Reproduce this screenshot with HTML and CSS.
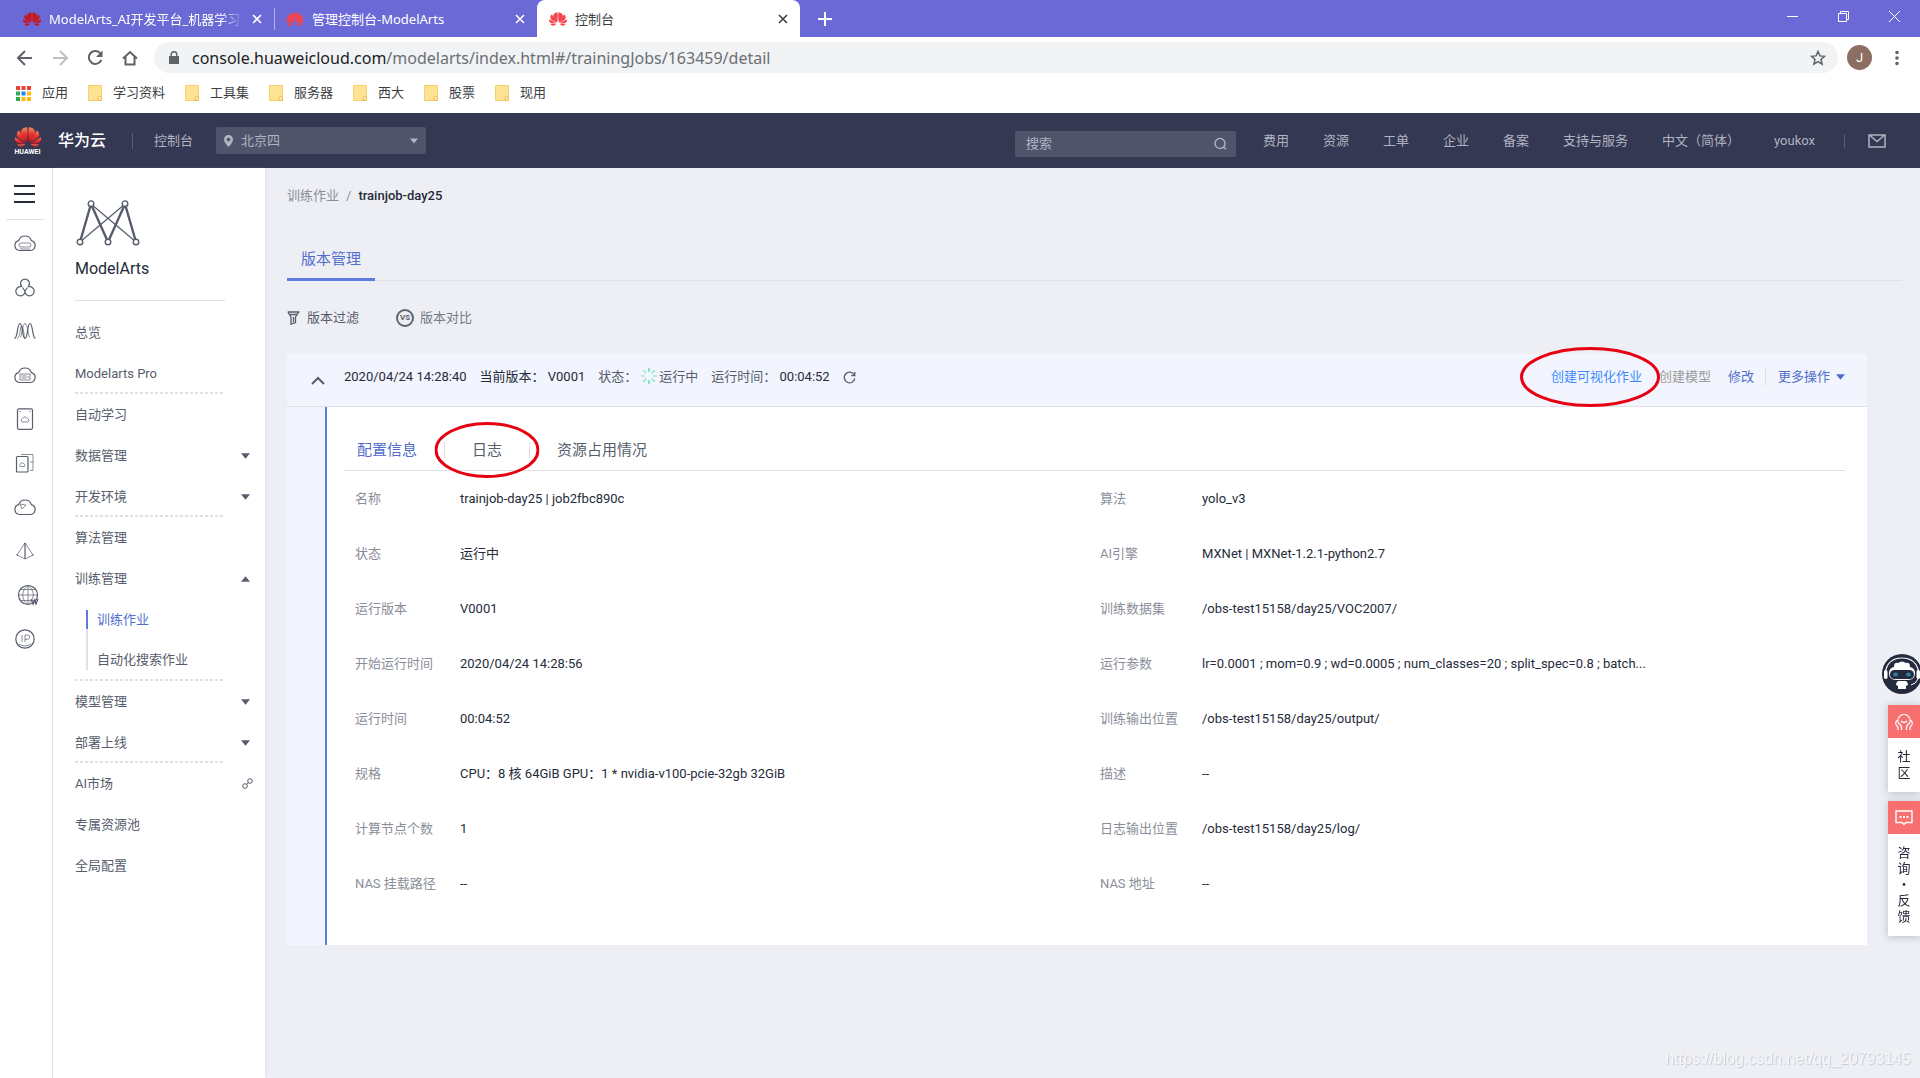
FILE: index.html
```html
<!DOCTYPE html>
<html lang="zh-CN">
<head>
<meta charset="utf-8">
<title>控制台</title>
<link rel="stylesheet" href="styles.css">
</head>
<body>
<svg class="defs" aria-hidden="true">
  <defs>
    <linearGradient id="red" x1="0" y1="0" x2="0" y2="1"><stop offset="0" stop-color="#f58a6a"/><stop offset=".45" stop-color="#e8342c"/><stop offset="1" stop-color="#c9151e"/></linearGradient>
    <g id="petals">
      <path d="M3.67 6.14S1.82 7.91 1.72 9.78v.35c.08 1.51 1.22 2.4 1.22 2.4 1.83 1.79 6.26 4.04 7.3 4.55l.12-.05v-.04C7.52 10.8 3.67 6.14 3.67 6.14z"/>
      <path d="M9.65 18.6l-.1-.08-7.38.26c.8 1.43 2.15 2.53 3.56 2.2.96-.25 3.16-1.78 3.92-2.38z"/>
      <path d="M9.75 18.05C7.2 16.1.29 12.26.29 12.26-.2 13.7.2 14.9.2 14.9c.72 1.95 3.1 2.86 3.1 2.86 1.2.5 5.8.35 6.45.29z"/>
      <path d="M10.9 16.7c1-3.7.9-10.7.4-13.3 0 0-.5-.4-1.2-.2-1.6.3-3.3 1.4-3.9 2.3-1 1.6-.5 3.2-.5 3.2.9 2.9 3.8 6.600 5.200 8z"/>
    </g>
    <symbol id="huawei" viewBox="0 2 24 20"><use href="#petals"/><use href="#petals" transform="translate(24 0) scale(-1 1)"/></symbol>
    <symbol id="close" viewBox="0 0 10 10"><path d="M1 1l8 8M9 1L1 9" fill="none" stroke="currentColor" stroke-width="1.6"/></symbol>
    <symbol id="folder" viewBox="0 0 14 16"><path d="M.5.5h13v15H.5z" fill="#fde293" stroke="#f3d26b"/><path d="M10 15.500v-3q1.700-2.500 3.500 0v3z" fill="#fbe8a8" stroke="#e9c14f"/></symbol>
    <symbol id="down" viewBox="0 0 10 6"><path d="M0 0h10L5 6z" fill="currentColor"/></symbol>
  </defs>
</svg>

<div class="tabstrip">
  <a class="tab" href="#"><svg class="fav deep"><use href="#huawei"/></svg><span class="tab-title fade">ModelArts_AI开发平台_机器学习</span><svg class="x"><use href="#close"/></svg></a>
  <a class="tab split" href="#"><svg class="fav"><use href="#huawei"/></svg><span class="tab-title">管理控制台-ModelArts</span><svg class="x"><use href="#close"/></svg></a>
  <a class="tab active" href="#"><svg class="fav"><use href="#huawei"/></svg><span class="tab-title">控制台</span><svg class="x"><use href="#close"/></svg></a>
  <button class="newtab" aria-label="New tab"><svg width="14" height="14" viewBox="0 0 14 14"><path d="M7 0v14M0 7h14" stroke="#fff" stroke-width="2"/></svg></button>
  <div class="winbtns">
    <button aria-label="Minimize"><svg width="11" height="11" viewBox="0 0 11 11"><path d="M0 5.500h11" stroke="#fff"/></svg></button>
    <button aria-label="Restore"><svg width="11" height="11" viewBox="0 0 11 11"><path d="M.5 2.500h8v8h-8zM2.500 2.500v-2h8v8h-2" fill="none" stroke="#fff"/></svg></button>
    <button aria-label="Close"><svg width="11" height="11" viewBox="0 0 11 11"><path d="M0 0l11 11M11 0L0 11" stroke="#fff"/></svg></button>
  </div>
</div>

<div class="toolbar">
  <button aria-label="Back"><svg width="18" height="18" viewBox="0 0 18 18"><path d="M16 9H3M9 2L2 9l7 7" fill="none" stroke="#5f6368" stroke-width="2"/></svg></button>
  <button aria-label="Forward"><svg width="18" height="18" viewBox="0 0 18 18"><path d="M2 9h13M9 2l7 7-7 7" fill="none" stroke="#bdc1c6" stroke-width="2"/></svg></button>
  <button aria-label="Reload"><svg width="18" height="18" viewBox="0 0 18 18"><path d="M14.500 4.500A6.500 6.500 0 1 0 15.300 11" fill="none" stroke="#5f6368" stroke-width="2"/><path d="M16.500 1.500v6.500h-6.500z" fill="#5f6368"/></svg></button>
  <button aria-label="Home"><svg width="18" height="18" viewBox="0 0 18 18"><path d="M2 9.500L9 3l7 6.500M4.500 8v7.500h9V8" fill="none" stroke="#5f6368" stroke-width="2"/></svg></button>
  <div class="omnibox">
    <svg width="10" height="13" viewBox="0 0 10 13"><path d="M0 5h10v8H0z" fill="#5f6368"/><path d="M2.200 5V3.500a2.800 2.800 0 0 1 5.600 0V5" fill="none" stroke="#5f6368" stroke-width="1.400"/></svg>
    <span class="url">console.huaweicloud.com<span class="path">/modelarts/index.html#/trainingJobs/163459/detail</span></span>
    <svg width="16" height="16" viewBox="0 0 16 16"><path d="M8 1.500l1.900 4.400 4.700.4-3.600 3.100 1.100 4.700L8 11.600l-4.100 2.500L5 9.400 1.400 6.300l4.700-.4z" fill="none" stroke="#5f6368" stroke-width="1.500"/></svg>
  </div>
  <span class="avatar">J</span>
  <button class="menu" aria-label="Menu"><svg width="4" height="16" viewBox="0 0 4 16"><g fill="#5f6368"><circle cx="2" cy="2.500" r="1.800"/><circle cx="2" cy="8" r="1.800"/><circle cx="2" cy="13.500" r="1.800"/></g></svg></button>
</div>

<div class="bookmarks">
  <a class="apps" href="#"><svg width="15" height="15" viewBox="0 0 15 15"><path d="M0 0h4v4H0zM5.500 0h4v4h-4zM11 0h4v4h-4z" fill="#ea4335"/><path d="M0 5.500h4v4H0zM0 11h4v4H0z" fill="#34a853"/><path d="M5.500 5.500h4v4h-4z" fill="#1a86f5"/><path d="M11 5.500h4v4h-4zM5.500 11h4v4h-4zM11 11h4v4h-4z" fill="#fbbc05"/></svg>应用</a>
  <a href="#"><svg class="fold"><use href="#folder"/></svg>学习资料</a>
  <a href="#"><svg class="fold"><use href="#folder"/></svg>工具集</a>
  <a href="#"><svg class="fold"><use href="#folder"/></svg>服务器</a>
  <a href="#"><svg class="fold"><use href="#folder"/></svg>西大</a>
  <a href="#"><svg class="fold"><use href="#folder"/></svg>股票</a>
  <a href="#"><svg class="fold"><use href="#folder"/></svg>现用</a>
</div>

<header class="header">
  <a class="brand" href="#"><span class="logo"><svg width="28" height="22"><use href="#huawei" fill="url(#red)"/></svg><span class="logo-text">HUAWEI</span></span><span class="brand-name">华为云</span></a>
  <a class="console" href="#">控制台</a>
  <button class="region"><svg width="9" height="12" viewBox="0 0 9 12"><path fill-rule="evenodd" d="M4.500 0A4.500 4.500 0 0 1 9 4.500C9 7.500 4.500 12 4.500 12S0 7.500 0 4.500A4.500 4.500 0 0 1 4.500 0zm0 2.800a1.800 1.800 0 1 0 0 3.600 1.800 1.800 0 0 0 0-3.600z" fill="#b0b3c0"/></svg><span>北京四</span><svg class="caret"><use href="#down"/></svg></button>
  <label class="search"><input type="text" placeholder="搜索" aria-label="搜索"><svg width="13" height="13" viewBox="0 0 13 13"><path d="M9.500 10A5 5 0 1 1 11 6q0 2.500-1.500 4l2.500 2.300" fill="none" stroke="#b0b3c0" stroke-width="1.400"/></svg></label>
  <nav class="topnav">
    <a href="#">费用</a><a href="#">资源</a><a href="#">工单</a><a href="#">企业</a><a href="#">备案</a><a href="#">支持与服务</a><a href="#">中文（简体）</a><a href="#">youkox</a>
  </nav>
  <a class="mail" href="#" aria-label="Messages"><svg width="18" height="14" viewBox="0 0 18 14"><path d="M1 1h16v12H1zM2 1.500l7 6 7-6" fill="none" stroke="#b0b3c0" stroke-width="1.500"/></svg></a>
</header>

<div class="body">
  <nav class="rail">
    <button class="burger" aria-label="Menu"><svg width="22" height="20" viewBox="0 0 22 20"><path d="M0 2h21M0 10h21M0 18h21" stroke="#252b3a" stroke-width="2"/></svg></button>
    <a href="#"><svg viewBox="0 0 22 22"><path d="M5.500 18.500A5 5 0 0 1 4.600 8.700 6.700 6.700 0 0 1 17.400 8.700a5 5 0 0 1-.9 9.800z"/><path class="thin" d="M8 11h7a1.800 1.800 0 0 1 0 4H7a1.800 1.800 0 0 1 0-4zM6 17h10"/></svg></a>
    <a href="#"><svg viewBox="0 0 22 22"><path d="M8 11A4.500 4.500 0 1 1 14 11M11 15a4.600 4.600 0 1 1-4.400-4.300M11 15a4.600 4.600 0 1 0 4.400-4.300M11 15l-2.500-3.500M11 15l2.500-3.500M7 8v3M15 8v3"/></svg></a>
    <a href="#"><svg viewBox="0 0 22 22"><path d="M.5 18.500C4 18 3 3.500 6 3.500S8 18.500 11 18.500 13 3.500 16 3.500 18 18 21.500 18.500"/><path class="thin" d="M3 18.500C7 17 6 3.500 8 6s2 12.500 3 12.500M11 3.500c3 0 3 14 5 14M11 3.500c-3 0-3 14-5 14"/></svg></a>
    <a href="#"><svg viewBox="0 0 22 22"><path d="M5.500 18.500A5 5 0 0 1 4.600 8.700 6.700 6.700 0 0 1 17.400 8.700a5 5 0 0 1-.9 9.800z"/><path class="thin" d="M6 10h10v6H6zM7.500 12h5M7.500 14h5M14 12v2"/></svg></a>
    <a href="#"><svg viewBox="0 0 22 22"><path d="M5 .8h12q1.500 0 1.500 1.500v17.500q0 1.500-1.500 1.500H5q-1.500 0-1.500-1.500V2.300Q3.500.8 5 .8z"/><path class="thin" d="M8 14a2 2 0 0 1 .5-3.500 2.800 2.800 0 0 1 5 0A2 2 0 0 1 14 14z"/><path d="M5.500 3.500h1M15.500 3.500h1"/></svg></a>
    <a href="#"><svg viewBox="0 0 22 22"><path d="M3.500 4.500h9.500q1 0 1 1V19q0 1-1 1H3.500q-1 0-1-1V5.500q0-1 1-1z"/><path class="thin" d="M7 2.500h12v16h-3M6 14.500a1.500 1.500 0 0 1 .4-2.500 2 2 0 0 1 3.600 0 1.500 1.500 0 0 1 .4 2.500zM16 10h3"/></svg></a>
    <a href="#"><svg viewBox="0 0 22 22"><path d="M5.500 18.500A5 5 0 0 1 4.600 8.700 6.700 6.700 0 0 1 17.400 8.700a5 5 0 0 1-.9 9.800z"/><path class="thin" d="M6 8l6 1-4 4z"/></svg></a>
    <a href="#"><svg viewBox="0 0 22 22"><path d="M11 3v16"/><path class="thin" d="M11 3L3 15l8 4 8-4zM2 15h2M18 15h2"/><path d="M10 3.500h2"/></svg></a>
    <a class="globe" href="#"><svg viewBox="0 0 22 22"><circle cx="11" cy="11" r="9.500"/><path class="thin" d="M1.500 11h19M11 1.500v19M4 5.500h14M4 16.500h14M11 1.500C4 6 4 16 11 20.500M11 1.500c7 4.500 7 14.500 0 19"/><path d="M14 15l2 5 1.500-4 1.500 4 2-5"/></svg></a>
    <a href="#"><svg viewBox="0 0 22 22"><circle cx="11" cy="11" r="9.200"/><path class="thin" d="M8 7v7M11 14V7h2.500a2 2 0 0 1 0 4.300H11M5 16q6 4 12 0"/></svg></a>
  </nav>

  <aside class="side">
    <svg class="ma" width="64" height="46" viewBox="0 0 64 46" fill="none" stroke="#575d6c"><path stroke-width="1.200" d="M15 4l45 38M49 4L4 42"/><path stroke-width="2.400" d="M4 42L15 4l17 38L49 4l11 38"/><g fill="#fff" stroke-width="1.400"><circle cx="15" cy="3.700" r="2.800"/><circle cx="49" cy="3.700" r="2.800"/><circle cx="4" cy="42" r="2.800"/><circle cx="32" cy="42" r="2.800"/><circle cx="60" cy="42" r="2.800"/></g></svg>
    <h1>ModelArts</h1>
    <ul class="menu-list">
      <li><a href="#">总览</a></li>
      <li class="dash"><a href="#">Modelarts Pro</a></li>
      <li><a href="#">自动学习</a></li>
      <li><a href="#">数据管理</a><svg class="arr"><use href="#down"/></svg></li>
      <li class="dash"><a href="#">开发环境</a><svg class="arr"><use href="#down"/></svg></li>
      <li><a href="#">算法管理</a></li>
      <li><a href="#">训练管理</a><svg class="arr up"><use href="#down"/></svg></li>
      <li class="sub on"><a href="#">训练作业</a></li>
      <li class="sub dash"><a href="#">自动化搜索作业</a></li>
      <li><a href="#">模型管理</a><svg class="arr"><use href="#down"/></svg></li>
      <li class="dash"><a href="#">部署上线</a><svg class="arr"><use href="#down"/></svg></li>
      <li><a href="#">AI市场</a><svg class="chain" viewBox="0 0 11 11"><g fill="none" stroke="#575d6c"><circle cx="3" cy="8" r="2.300"/><circle cx="8" cy="3" r="2.300"/><path d="M4 7l3-3"/></g></svg></li>
      <li><a href="#">专属资源池</a></li>
      <li><a href="#">全局配置</a></li>
    </ul>
  </aside>

  <main class="main">
    <div class="crumb"><a href="#">训练作业</a><span>/</span><b>trainjob-day25</b></div>
    <div class="tabs"><a class="on" href="#">版本管理</a></div>
    <div class="tools">
      <button><svg width="13" height="14" viewBox="0 0 13 14"><path d="M.7 1h11.600M1 1.500l3 4.500v7l4.500-1.500V6l3-4.500M2 3.500h9M6.500 6v5" fill="none" stroke="#575d6c" stroke-width="1.300"/></svg>版本过滤</button>
      <button class="cmp"><span class="vs">VS</span>版本对比</button>
    </div>

    <section class="panel">
      <div class="bar">
        <button class="fold-btn" aria-label="Collapse"><svg width="14" height="9" viewBox="0 0 14 9"><path d="M1 8l6-6 6 6" fill="none" stroke="#575d6c" stroke-width="2"/></svg></button>
        <span class="dark">2020/04/24 14:28:40</span>
        <span class="dark">当前版本： V0001</span>
        <span class="state">状态：<svg width="16" height="16" viewBox="0 0 16 16"><g fill="none" stroke="#6fe0bd" stroke-width="1.600"><path d="M8 0v4M8 12v4"/><path d="M0 8h4M12 8h4M2.300 2.300l2.900 2.900" opacity=".6"/><path d="M10.800 10.800l2.900 2.900M2.300 13.700l2.900-2.900M13.700 2.300l-2.900 2.900" opacity=".8"/></g></svg>运行中</span>
        <span>运行时间： <span class="dark">00:04:52</span></span>
        <button class="refresh" aria-label="Refresh"><svg width="13" height="13" viewBox="0 0 13 13"><path d="M11 3.500A5.300 5.300 0 1 0 11.800 7.500M11.800 1v3.500H8.300" fill="none" stroke="#575d6c" stroke-width="1.300"/></svg></button>
        <div class="ops">
          <a class="hot marked" href="#">创建可视化作业<svg class="mark mark-visual" viewBox="0 0 140 60"><ellipse cx="70" cy="30" rx="68.500" ry="28.500"/></svg></a>
          <a class="off" href="#">创建模型</a>
          <a href="#">修改</a>
          <a class="more" href="#">更多操作<svg class="arr"><use href="#down"/></svg></a>
        </div>
      </div>
      <div class="detail">
        <div class="subtabs">
          <a class="on" href="#">配置信息</a>
          <a class="marked" href="#">日志<svg class="mark mark-log" viewBox="0 0 105 56"><ellipse cx="52.500" cy="28" rx="51" ry="26.500"/></svg></a>
          <a href="#">资源占用情况</a>
        </div>
        <div class="cols">
          <dl>
            <div><dt>名称</dt><dd>trainjob-day25 | job2fbc890c</dd></div>
            <div><dt>状态</dt><dd>运行中</dd></div>
            <div><dt>运行版本</dt><dd>V0001</dd></div>
            <div><dt>开始运行时间</dt><dd>2020/04/24 14:28:56</dd></div>
            <div><dt>运行时间</dt><dd>00:04:52</dd></div>
            <div><dt>规格</dt><dd>CPU：8 核 64GiB GPU：1 * nvidia-v100-pcie-32gb 32GiB</dd></div>
            <div><dt>计算节点个数</dt><dd>1</dd></div>
            <div><dt>NAS 挂载路径</dt><dd>--</dd></div>
          </dl>
          <dl>
            <div><dt>算法</dt><dd>yolo_v3</dd></div>
            <div><dt>AI引擎</dt><dd>MXNet | MXNet-1.2.1-python2.7</dd></div>
            <div><dt>训练数据集</dt><dd>/obs-test15158/day25/VOC2007/</dd></div>
            <div><dt>运行参数</dt><dd>lr=0.0001 ; mom=0.9 ; wd=0.0005 ; num_classes=20 ; split_spec=0.8 ; batch...</dd></div>
            <div><dt>训练输出位置</dt><dd>/obs-test15158/day25/output/</dd></div>
            <div><dt>描述</dt><dd>--</dd></div>
            <div><dt>日志输出位置</dt><dd>/obs-test15158/day25/log/</dd></div>
            <div><dt>NAS 地址</dt><dd>--</dd></div>
          </dl>
        </div>
      </div>
    </section>
  </main>
</div>

<div class="float">
  <svg class="robot" width="40" height="40" viewBox="0 0 40 40"><circle cx="20" cy="20" r="20" fill="#252b3f"/><path d="M3 20Q5 4 20 4t17 16" fill="none" stroke="#fff" stroke-width="1.200"/><path d="M12 13Q12 8 16 9q4-3 8 0 4-1 4 4 5 1 5 6 0 7-7 7H14q-7 0-7-7 0-5 5-6z" fill="#fff"/><rect x="8" y="16" width="24" height="9" rx="4.500" fill="#252b3f"/><ellipse cx="13.500" cy="20.500" rx="2.500" ry="2" fill="#2b7f9c"/><ellipse cx="26.500" cy="20.500" rx="2.500" ry="2" fill="#2b7f9c"/><rect x="2" y="16" width="3.500" height="9" rx="1.700" fill="#fff"/><rect x="34.500" y="16" width="3.500" height="9" rx="1.700" fill="#fff"/><path d="M16 27h8q2 1 2 4l-2 1v3h-8v-3l-2-1q0-3 2-4z" fill="#fff"/><path d="M36 25q-2 5-7 6" fill="none" stroke="#fff"/></svg>
  <a class="card" href="#"><span class="top"><svg width="18" height="18" viewBox="0 0 18 18"><g fill="none" stroke="#fff" stroke-width="1.200"><path d="M4.200 11a6 6 0 1 1 9.600 0M6 8q3 3 6 0M3 7Q0 8 1 11.500L3 14.500v2.500M15 7q3 1 2 4.500l-2 3V17M4.500 10.500q2.500 2.500 2 6.500M13.500 10.500q-2.500 2.500-2 6.500"/></g></svg></span><span class="vtext">社<br>区</span></a>
  <a class="card" href="#"><span class="top"><svg width="18" height="16" viewBox="0 0 18 16"><path d="M1 1h16v11.500h-6L9 14.500l-2-2H1z" fill="none" stroke="#fff" stroke-width="1.400"/><path d="M4.500 6h2v2h-2zM8 6h2v2H8zM11.500 6h2v2h-2z" fill="#fff"/></svg></span><span class="vtext">咨<br>询<br>・<br>反<br>馈</span></a>
</div>
<div class="watermark">https://blog.csdn.net/qq_20793145</div>
</body>
</html>
```

FILE: styles.css
```css
* { box-sizing: border-box; }
body {
  margin: 0;
  min-height: 100vh;
  display: flex;
  flex-direction: column;
  background: #eeeff5;
  color: #575d6c;
  font: 13px/20px Roboto, "Noto Sans CJK SC", sans-serif;
}
a { color: inherit; text-decoration: none; }
button {
  padding: 0;
  border: 0;
  background: none;
  color: inherit;
  font: inherit;
  display: flex;
  align-items: center;
}
svg { flex: none; display: block; }
.defs { position: absolute; width: 0; height: 0; }

/* browser frame */
.tabstrip {
  display: flex;
  height: 37px;
  background: #6a69d5;
  color: #fff;
  font-family: "Noto Sans", "Noto Sans CJK SC", sans-serif;
  padding-left: 11px;
}
.tab {
  width: 263px;
  display: flex;
  align-items: center;
  padding: 0 12px;
  gap: 8px;
}
.tab.split { position: relative; }
.tab.split::before { content: ""; position: absolute; left: 0; top: 8px; width: 1px; height: 22px; background: #b5b4ea; }
.tab.active { background: #fff; color: #3c4043; border-radius: 8px 8px 0 0; }
.tab-title { flex: 1; white-space: nowrap; overflow: hidden; }
.fade { mask-image: linear-gradient(90deg, #000 88%, transparent); }
.fav { width: 18px; height: 16px; fill: #f6444c; }
.fav.deep { fill: #c8161e; }
.x { width: 10px; height: 10px; }
.newtab { margin-left: 18px; }
.winbtns { margin-left: auto; height: 32px; display: flex; }
.winbtns button { width: 51px; justify-content: center; }

.toolbar { display: flex; align-items: center; height: 41px; padding: 0 15px 0 16px; gap: 17px; background: #fff; }
.omnibox {
  flex: 1;
  height: 31px;
  margin-left: -2px;
  padding: 0 12px 0 15px;
  border-radius: 16px;
  background: #f1f3f4;
  display: flex;
  align-items: center;
  gap: 13px;
}
.url { flex: 1; font: 16px/24px "Noto Sans", sans-serif; color: #202124; }
.path { color: #6b6f74; }
.avatar { width: 25px; height: 25px; border-radius: 50%; background: #8d6e63; color: #fff; text-align: center; line-height: 25px; margin-left: -8px; }
.menu { width: 16px; justify-content: center; }
.bookmarks { display: flex; align-items: center; gap: 20px; height: 35px; padding: 0 16px 5px; background: #fff; color: #3c4043; }
.bookmarks a { display: flex; align-items: center; gap: 11px; }
.fold { width: 14px; height: 16px; }

/* console header */
.header { display: flex; align-items: center; height: 55px; padding: 0 34px 0 13px; background: #343852; color: #b0b3c0; }
.brand { display: flex; align-items: center; gap: 16px; }
.logo { display: flex; flex-direction: column; align-items: center; width: 29px; }
.logo-text { font: bold 7px/8px Roboto, sans-serif; color: #fff; }
.brand-name { font-size: 16px; font-weight: 500; color: #fff; }
.console { margin-left: 26px; padding-left: 21px; border-left: 1px solid #5a5e75; line-height: 16px; }
.region { width: 210px; height: 27px; margin-left: 23px; padding: 0 8px; gap: 8px; border-radius: 2px; background: #50546b; }
.caret { width: 8px; height: 6px; margin-left: auto; }
.search { display: flex; align-items: center; width: 221px; height: 26px; margin: 6px 27px 0 auto; padding: 0 9px 0 11px; border-radius: 2px; background: #50546b; }
.search input { flex: 1; min-width: 0; padding: 0; border: 0; outline: 0; background: none; color: #b0b3c0; font: inherit; }
.search input::placeholder { color: #b0b3c0; }
.topnav { display: flex; gap: 34px; }
.mail { margin-left: 29px; padding-left: 23px; border-left: 1px solid #5a5e75; }

/* left navigation */
.body { flex: 1; display: flex; }
.rail { width: 53px; padding: 6px 2px 0 0; background: #fff; border-right: 1px solid #dfe1e6; display: flex; flex-direction: column; align-items: center; }
.rail a { height: 44px; display: flex; align-items: center; }
.rail a svg { width: 22px; height: 22px; fill: none; stroke: #575d6c; stroke-width: 1.2; }
.rail .thin { stroke-width: 0.7; }
.rail .globe { padding-left: 5px; }
.burger { width: 38px; height: 46px; margin-bottom: 1px; padding-bottom: 5px; justify-content: center; border-bottom: 1px solid #dfe1e6; }
.side { width: 212px; padding: 32px 15px 0 22px; background: #fff; box-shadow: 3px 0 3px -2px #dfe1e8; }
.side h1 { margin: 13px 0 0; font: 16px/20px Roboto, sans-serif; color: #252b3a; }
.side h1::after { content: ""; display: block; width: 150px; margin-top: 21px; border-bottom: 1px solid #dfe1e6; }
.ma { margin-left: 1px; }
.menu-list { list-style: none; margin: 11px 0 0; padding: 0; }
.menu-list li { height: 41px; display: flex; align-items: center; justify-content: space-between; position: relative; }
.dash::after { content: ""; position: absolute; left: 0; bottom: 0; width: 150px; height: 2px; background: repeating-linear-gradient(90deg, #dfe1e6 0 3px, transparent 3px 5px); }
.arr { width: 9px; height: 6px; }
.menu-list .arr { color: #575d6c; }
.up { transform: rotate(180deg); }
.chain { width: 11px; height: 11px; margin-right: -3px; }
.menu-list .sub { padding-left: 11px; }
.sub a { padding-left: 9px; border-left: 2px solid #dfe1e6; }
.sub.dash { align-items: flex-start; }
.sub.dash a { height: 30px; padding-top: 10px; }
.sub.on { align-items: flex-end; color: #526ecc; }
.sub.on a { height: 30px; border-image: linear-gradient(#5e7ce0 19px, #dfe1e6 19px) 1; }

/* content */
.main { flex: 1; padding: 18px 18px 0 22px; min-width: 0; }
.crumb { display: flex; gap: 7px; color: #8a8e99; }
.crumb b { font-weight: 500; color: #252b3a; }
.tabs { display: flex; align-items: flex-end; height: 49px; margin-top: 26px; border-bottom: 1px solid #dfe1e6; font-size: 15px; }
.tabs a { padding: 0 14px 8px; margin-bottom: -1px; border-bottom: 3px solid #5e7ce0; color: #526ecc; line-height: 22px; }
.tools { display: flex; height: 73px; align-items: center; gap: 37px; }
.tools button { gap: 7px; }
.tools .cmp { color: #777b86; gap: 6px; }
.vs { width: 18px; height: 18px; border: 2px solid #5f6370; border-radius: 50%; font: bold 8px/14px Roboto, sans-serif; text-align: center; color: #5f6370; }
.panel { margin-right: 35px; background: #f2f5fd; }
.bar { display: flex; align-items: center; height: 53px; padding: 0 22px 6px 24px; gap: 13px; border-bottom: 1px solid #dfe1e6; white-space: nowrap; }
.dark { color: #252b3a; }
.fold-btn { margin: 6px 6px 0 0; }
.state { display: flex; align-items: center; }
.state svg { margin: 0 2px 2px 4px; }
.ops { margin-left: auto; display: flex; align-items: center; gap: 17px; color: #526ecc; }
.ops .hot { color: #3d8bff; }
.ops .off { color: #9b9b9b; }
.more { display: flex; align-items: center; gap: 6px; padding-left: 12px; margin-left: -6px; border-left: 1px solid #dfe1e6; line-height: 18px; }
.detail { margin-left: 38px; padding: 0 22px 34px 17px; border-left: 2px solid #5e7ce0; background: #fff; }
.subtabs { display: flex; align-items: center; height: 64px; padding: 22px 0 0 13px; border-bottom: 1px solid #dfe1e6; font-size: 15px; }
.subtabs a { line-height: 16px; padding-right: 27px; }
.subtabs a + a { padding-left: 27px; border-left: 1px solid #dfe1e6; }
.subtabs .on { color: #526ecc; }
.cols { display: flex; padding-left: 11px; }
.cols dl { flex: 1; margin: 0; }
.cols dl > div { display: flex; height: 55px; align-items: center; }
.cols dt { width: 105px; color: #8a8e99; }
.cols dl + dl dt { width: 102px; }
.cols dd { margin: 0; color: #252b3a; }

/* hand-drawn highlights */
.marked { position: relative; }
.mark { position: absolute; fill: none; stroke: #e60012; stroke-width: 3; z-index: 2; top: 50%; left: 50%; transform: translate(-50%, -50%); pointer-events: none; }
.mark-visual { width: 140px; height: 60px; left: 43%; }
.mark-log { width: 105px; height: 56px; }

/* floating help */
.float { position: fixed; right: 0; top: 654px; display: flex; flex-direction: column; align-items: flex-end; gap: 9px; color: #252b3a; }
.robot { margin: 0 -2px 2px 0; }
.card { width: 32px; background: #fff; box-shadow: 0 1px 8px rgba(37, 43, 58, 0.25); }
.top { height: 33px; display: flex; align-items: center; justify-content: center; background: #f76f6f; }
.vtext { display: block; padding: 11px 0; text-align: center; line-height: 16px; }
.watermark { position: fixed; right: 9px; bottom: 8px; font: 16px/22px "Liberation Sans", sans-serif; color: #f5f6fa; text-shadow: 1px 1px 1px #c8cad2; }
```
